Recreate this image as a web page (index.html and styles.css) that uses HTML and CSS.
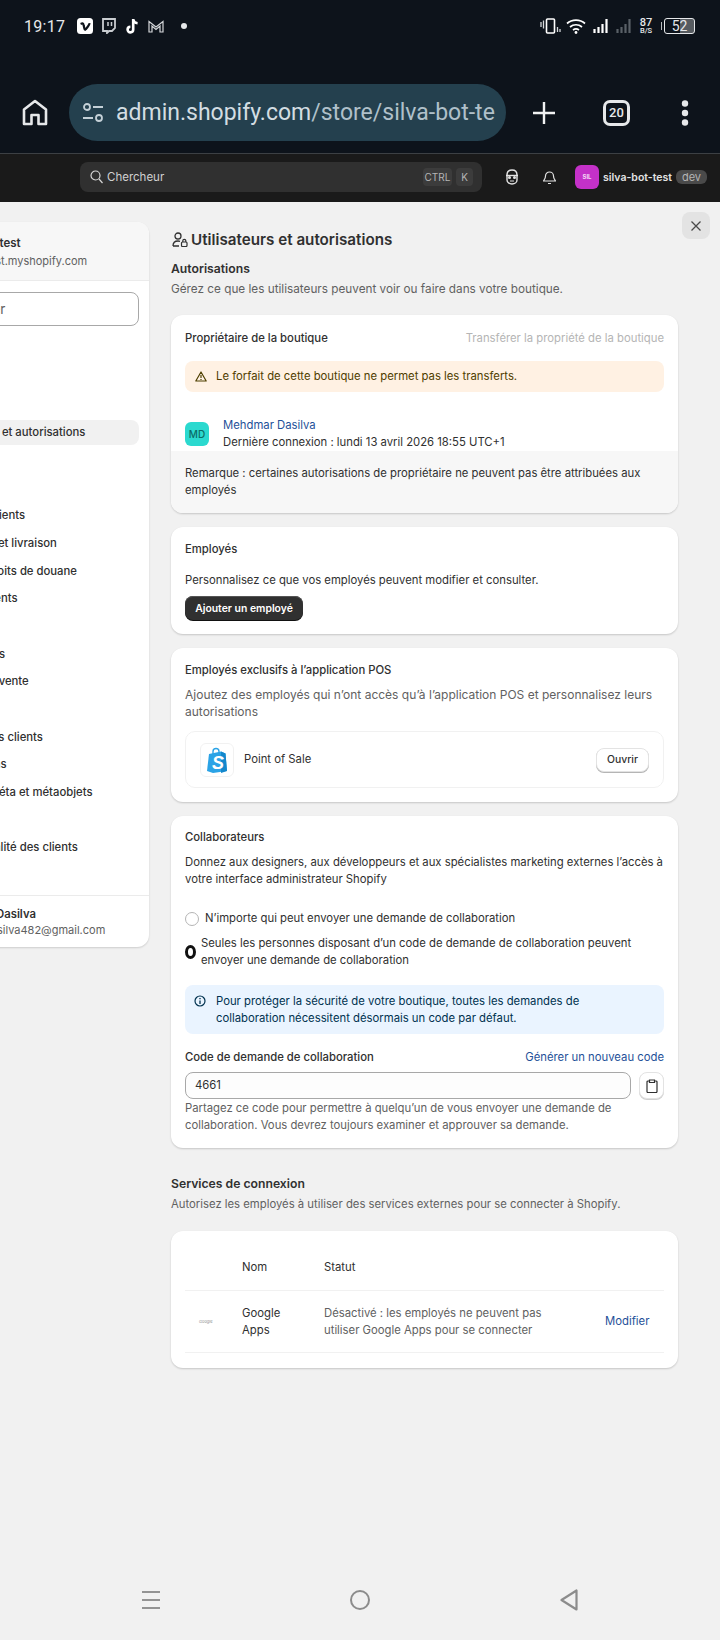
FILE: index.html
```html
<!DOCTYPE html>
<html lang="fr">
<head>
    <meta charset="UTF-8">
    <meta name="viewport" content="width=device-width, initial-scale=1.0">
    <title>Utilisateurs et autorisations</title>
    <link rel="stylesheet" href="styles.css">
</head>
<body>
<div class="page">
    <!-- phone status bar + browser toolbar -->
    <div class="browser">
        <div class="status">
            <span class="clock">19:17</span>
            <svg class="st-vimeo" width="16" height="16" viewBox="0 0 16 16"><rect width="16" height="16" rx="3.5" fill="#fff"/><path d="M3.6 6 L4.6 5.6 C6 5 6.4 6 6.7 7.6 L7.5 11 C7.8 12 8.2 12 8.8 11.2 C10.4 9.4 12.6 6.6 12.4 5.2" fill="none" stroke="#0d131b" stroke-width="2.2"/></svg>
            <svg class="st-twitch" width="14" height="16" viewBox="0 0 14 16"><path d="M1 1h12v9l-3 3H7l-2 2v-2H1z" fill="none" stroke="#c9cdd1" stroke-width="1.8"/><path d="M6 4v4M9.5 4v4" stroke="#c9cdd1" stroke-width="1.5"/></svg>
            <svg class="st-tiktok" width="14" height="17" viewBox="0 0 14 17"><path d="M8.2 1v10.6a2.8 2.8 0 1 1-2.8-2.8M8.2 1.4c.4 2.3 1.9 3.6 4.4 3.8" fill="none" stroke="#fff" stroke-width="2.6"/></svg>
            <svg class="st-m" width="16" height="13" viewBox="0 0 16 13"><path d="M1 12V1.500L8 7l7-5.500V12h-3V6L8 9.500 4 6v6z" fill="none" stroke="#d5d8db" stroke-width="1.200"/></svg>
            <span class="st-dot"></span>
            <svg class="st-vib" width="22" height="17" viewBox="0 0 22 17"><rect x="6.500" y="1" width="8" height="14" rx="1" fill="none" stroke="#fff" stroke-width="1.600"/><path d="M1 4v5M3.500 2.500v8M17.500 9v5M20 11v3" stroke="#d5d8db" stroke-width="1.300"/></svg>
            <svg class="st-wifi" width="20" height="16" viewBox="0 0 20 16"><path d="M1 5.500c5-4.500 13-4.500 18 0M4 9c3.500-3 8.500-3 12 0M7 12c1.800-1.300 4.200-1.300 6 0" fill="none" stroke="#fff" stroke-width="1.700"/><circle cx="10" cy="14.500" r="1.400" fill="#fff"/></svg>
            <svg class="st-sig" width="16" height="16" viewBox="0 0 16 16"><path d="M1.500 11v4M5.500 9v6M9.500 6v9M13.500 1v14" stroke="#fff" stroke-width="2.200"/></svg>
            <svg class="st-sig2" width="16" height="16" viewBox="0 0 16 16"><path d="M1.500 11v4M5.500 9v6M9.500 6v9M13.500 1v14" stroke="#596067" stroke-width="2.200"/></svg>
            <span class="st-speed"><b>87</b><i>B/S</i></span>
            <span class="st-batt-cap"></span>
            <span class="st-batt"><span>52</span></span>
        </div>
        <div class="toolbar">
            <svg class="tb-home" width="26" height="27" viewBox="0 0 26 27"><path d="M2 25V10.500L13 2l11 8.500V25h-7.500v-9h-7v9z" fill="none" stroke="#e6e8ea" stroke-width="2.600" stroke-linejoin="round"/></svg>
            <div class="addr">
                <svg width="22" height="20" viewBox="0 0 22 20"><circle cx="5" cy="4" r="3" fill="none" stroke="#c4d0d7" stroke-width="1.800"/><path d="M11 4h10M1 15h10" stroke="#c4d0d7" stroke-width="1.800"/><circle cx="17" cy="15" r="3" fill="none" stroke="#c4d0d7" stroke-width="1.800"/></svg>
                <span class="addr-text"><span class="addr-host">admin.shopify.com</span>/store/silva-bot-test</span>
            </div>
            <svg class="tb-plus" width="24" height="24" viewBox="0 0 24 24"><path d="M12 1v22M1 12h22" stroke="#f1f2f3" stroke-width="2.400"/></svg>
            <span class="tb-tabs">20</span>
            <svg class="tb-dots" width="8" height="26" viewBox="0 0 8 26"><circle cx="4" cy="3.500" r="3.200" fill="#e6e8ea"/><circle cx="4" cy="13" r="3.200" fill="#e6e8ea"/><circle cx="4" cy="22.500" r="3.200" fill="#e6e8ea"/></svg>
        </div>
    </div>

    <!-- shopify top bar -->
    <div class="topbar">
        <div class="search">
            <svg width="13" height="14" viewBox="0 0 13 14"><circle cx="5.500" cy="5.500" r="4.500" fill="none" stroke="#d8d8d8" stroke-width="1.200"/><path d="M9 9l3.500 4" stroke="#d8d8d8" stroke-width="1.200"/></svg>
            <span class="search-label">Chercheur</span>
            <span class="kbd kbd-ctrl">CTRL</span>
            <span class="kbd kbd-k">K</span>
        </div>
        <svg class="tp-face" width="14" height="16" viewBox="0 0 14 16"><path d="M2 6c0-3 2-5 5-5s5 2 5 5v5c0 2-2 4-5 4s-5-2-5-4z" fill="none" stroke="#e3e3e3" stroke-width="1.400"/><path d="M1 6.500h12" stroke="#e3e3e3" stroke-width="1.400"/><circle cx="4.500" cy="8.500" r="1.500" fill="#e3e3e3"/><circle cx="9.500" cy="8.500" r="1.500" fill="#e3e3e3"/><path d="M5 12h4" stroke="#e3e3e3"/></svg>
        <svg class="tp-bell" width="13" height="15" viewBox="0 0 13 15"><path d="M2.500 6a4 4 0 0 1 8 0c0 3 1.500 4 2 5H.5c.5-1 2-2 2-5zM5 13.500h3" fill="none" stroke="#e3e3e3" stroke-width="1.200"/></svg>
        <span class="tp-avatar">SIL</span>
        <span class="tp-store">silva-bot-test</span>
        <span class="tp-dev">dev</span>
    </div>

    <!-- settings modal -->
    <div class="modal">
        <button class="close" type="button"><svg width="12" height="12" viewBox="0 0 12 12"><path d="M1.500 1.500l9 9M10.500 1.500l-9 9" stroke="#4a4a4a" stroke-width="1.300"/></svg></button>

        <aside class="side">
            <div class="side-head">
                <div class="side-store">silva-bot-test</div>
                <div class="side-url">silva-bot-test.myshopify.com</div>
            </div>
            <div class="side-search"><div class="side-input">Rechercher</div></div>
            <nav class="side-nav">
                <a>Général</a>
                <a>Forfait</a>
                <a>Facturation</a>
                <a class="on">Utilisateurs et autorisations</a>
                <a>Paiements</a>
                <a>Compte</a>
                <a>Comptes clients</a>
                <a>Expédition et livraison</a>
                <a>Taxes et droits de douane</a>
                <a>Emplacements</a>
                <a>Marchés</a>
                <a>Applications</a>
                <a>Canaux de vente</a>
                <a>Domaines</a>
                <a>Événements clients</a>
                <a>Notifications</a>
                <a>Données méta et métaobjets</a>
                <a>Langues</a>
                <a>Confidentialité des clients</a>
                <a>Politiques</a>
            </nav>
            <div class="side-user">
                <div class="side-name">Mehdmar Dasilva</div>
                <div class="side-mail">mehdmardasilva482@gmail.com</div>
            </div>
        </aside>

        <main class="main">
            <h1 class="title">
                <svg width="16" height="15" viewBox="0 0 16 15"><circle cx="6" cy="4" r="3" fill="none" stroke="#303030" stroke-width="1.300"/><path d="M1 14c0-3 2-5 5-5 1 0 1.500.2 2 .4M1 14h6" fill="none" stroke="#303030" stroke-width="1.300"/><rect x="9.500" y="10" width="5.500" height="4.500" rx="1" fill="none" stroke="#303030" stroke-width="1.200"/><path d="M10.800 10V8.800a1.500 1.500 0 0 1 3 0V10" fill="none" stroke="#303030" stroke-width="1.200"/></svg>
                Utilisateurs et autorisations
            </h1>
            <h2 class="sec-title sec-auth">Autorisations</h2>
            <p class="sec-text sec-text-wide">Gérez ce que les utilisateurs peuvent voir ou faire dans votre boutique.</p>

            <section class="card card-first">
                <div class="card-body">
                    <div class="row-between">
                        <h3>Propriétaire de la boutique</h3>
                        <span class="muted">Transférer la propriété de la boutique</span>
                    </div>
                    <div class="banner warn">
                        <svg width="12" height="11" viewBox="0 0 12 11"><path d="M6 1L.8 10h10.400z" fill="none" stroke="#4f4000" stroke-width="1.200" stroke-linejoin="round"/><path d="M6 4v3M6 8v1" stroke="#4f4000" stroke-width="1.200"/></svg>
                        <span>Le forfait de cette boutique ne permet pas les transferts.</span>
                    </div>
                    <div class="owner">
                        <span class="avatar">MD</span>
                        <div>
                            <div class="link">Mehdmar Dasilva</div>
                            <div class="dark">Dernière connexion : lundi 13 avril 2026 18:55 UTC+1</div>
                        </div>
                    </div>
                </div>
                <div class="card-foot">Remarque : certaines autorisations de propriétaire ne peuvent pas être attribuées aux employés</div>
            </section>

            <section class="card pad">
                <h3>Employés</h3>
                <p class="dark staff-text">Personnalisez ce que vos employés peuvent modifier et consulter.</p>
                <button class="btn-dark" type="button">Ajouter un employé</button>
            </section>

            <section class="card pad">
                <h3>Employés exclusifs à l’application POS</h3>
                <p class="grey pos-text">Ajoutez des employés qui n’ont accès qu’à l’application POS et personnalisez leurs autorisations</p>
                <div class="app-box">
                    <span class="app-tile">
                        <svg width="20" height="26" viewBox="0 0 20 26"><path d="M2 7L14 4.500l4.500 2 1.500 17.500-14 2-6-2z" fill="#2ba3e6"/><path d="M14 4.500l4.500 2 1.500 17.500-6 2z" fill="#1488cc"/><path d="M6 7V4.500a3 3 0 0 1 6 0V7" fill="none" stroke="#2ba3e6" stroke-width="1.400"/><text x="5" y="22" class="app-s">S</text></svg>
                    </span>
                    <span class="dark">Point of Sale</span>
                    <button class="btn-light" type="button">Ouvrir</button>
                </div>
            </section>

            <section class="card pad pad-collab">
                <h3>Collaborateurs</h3>
                <p class="dark mt8">Donnez aux designers, aux développeurs et aux spécialistes marketing externes l’accès à votre interface administrateur Shopify</p>
                <label class="radio radio-one"><span class="dot"></span><span>N’importe qui peut envoyer une demande de collaboration</span></label>
                <label class="radio radio-two"><span class="dot-on"></span><span>Seules les personnes disposant d’un code de demande de collaboration peuvent envoyer une demande de collaboration</span></label>
                <div class="banner info">
                    <svg width="12" height="12" viewBox="0 0 12 12"><circle cx="6" cy="6" r="5" fill="none" stroke="#00324f" stroke-width="1.200"/><path d="M6 5.500V9M6 3v1.200" stroke="#00324f" stroke-width="1.300"/></svg>
                    <span>Pour protéger la sécurité de votre boutique, toutes les demandes de collaboration nécessitent désormais un code par défaut.</span>
                </div>
                <div class="row-between code-head">
                    <span class="label">Code de demande de collaboration</span>
                    <span class="link">Générer un nouveau code</span>
                </div>
                <div class="code-row">
                    <div class="code-input">4661</div>
                    <button class="code-copy" type="button"><svg width="12" height="14" viewBox="0 0 12 14"><path d="M3.500 2H2a1 1 0 0 0-1 1v9.500a1 1 0 0 0 1 1h8a1 1 0 0 0 1-1V3a1 1 0 0 0-1-1H8.500M3.500 1h5v2.500h-5z" fill="none" stroke="#303030" stroke-width="1.200"/></svg></button>
                </div>
                <p class="grey code-help">Partagez ce code pour permettre à quelqu’un de vous envoyer une demande de collaboration. Vous devrez toujours examiner et approuver sa demande.</p>
            </section>

            <h2 class="sec-title sec-serv">Services de connexion</h2>
            <p class="sec-text">Autorisez les employés à utiliser des services externes pour se connecter à Shopify.</p>

            <section class="card card-table">
                <div class="t-row t-head">
                    <span></span>
                    <span>Nom</span>
                    <span>Statut</span>
                </div>
                <div class="t-row t-line">
                    <span class="g-logo">Google</span>
                    <span class="dark t-name">Google Apps</span>
                    <span class="grey t-status">Désactivé : les employés ne peuvent pas utiliser Google Apps pour se connecter</span>
                    <span class="link">Modifier</span>
                </div>
            </section>
        </main>
    </div>

    <!-- android nav buttons -->
    <div class="navbar">
        <svg width="18" height="20" viewBox="0 0 18 20"><path d="M0 2h18M0 10h18M0 18h18" stroke="#939393" stroke-width="2.200"/></svg>
        <svg width="20" height="20" viewBox="0 0 20 20"><circle cx="10" cy="10" r="9" fill="none" stroke="#8c8c8c" stroke-width="2"/></svg>
        <svg width="18" height="22" viewBox="0 0 18 22"><path d="M16.500 1.500v19L1.500 11z" fill="none" stroke="#8c8c8c" stroke-width="2.200" stroke-linejoin="round"/></svg>
    </div>
</div>
</body>
</html>
```

FILE: styles.css
```css
* {
    box-sizing: border-box;
}
body {
    margin: 0;
    font-family: Inter, "Noto Sans", sans-serif;
    font-size: 11.300px;
    line-height: 17px;
    color: #303030;
    background-color: #f1f1f1;
}
p, h1, h2, h3 {
    margin: 0;
}
svg {
    display: block;
    flex: none;
}
button {
    font-family: inherit;
    cursor: pointer;
}
.page {
    width: 720px;
    height: 1640px;
    display: flex;
    flex-direction: column;
    overflow: hidden;
}

/* browser */
.browser {
    height: 154px;
    background-color: #0d131b;
    border-bottom: 1px solid #3c4044;
    flex: none;
}
.status {
    height: 52px;
    display: flex;
    align-items: center;
    padding-left: 24px;
    font-family: Roboto, sans-serif;
    color: #e6e8ea;
}
.clock {
    font-size: 16px;
    width: 53px;
    letter-spacing: 0.3px;
}
.st-twitch { margin-left: 9px; }
.st-tiktok { margin-left: 9px; }
.st-m { margin-left: 9px; }
.st-dot {
    width: 6px;
    height: 6px;
    border-radius: 50%;
    background-color: #e6e8ea;
    margin-left: 17px;
    margin-right: auto;
}
.st-wifi { margin-left: 4px; }
.st-sig { margin-left: 7px; }
.st-sig2 { margin-left: 7px; }
.st-speed {
    margin-left: 6px;
    width: 16px;
    display: flex;
    flex-direction: column;
    align-items: center;
    font-size: 11px;
    line-height: 9px;
}
.st-speed b { font-weight: 500; }
.st-speed i {
    font-style: normal;
    font-weight: 500;
    font-size: 7.500px;
    line-height: 7px;
}
.st-batt-cap {
    width: 1px;
    height: 8px;
    background-color: #b8bbbe;
    margin: 0 2px 0 7px;
}
.st-batt {
    width: 31px;
    height: 16px;
    margin-right: 25px;
    border: 1px solid #e6e8ea;
    border-radius: 3px;
    background: linear-gradient(90deg, #0d131b 52%, #565b60 52%);
    font-size: 14px;
    line-height: 14px;
    text-align: center;
}
.toolbar {
    display: flex;
    align-items: center;
    height: 57px;
    margin-top: 32px;
    padding-left: 22px;
}
.addr {
    width: 437px;
    height: 57px;
    margin-left: 21px;
    border-radius: 29px;
    background-color: #24404e;
    display: flex;
    align-items: center;
    padding-left: 13px;
    overflow: hidden;
}
.addr-text {
    margin-left: 12px;
    width: 379px;
    overflow: hidden;
    white-space: nowrap;
    font-family: Roboto, sans-serif;
    font-size: 23px;
    line-height: 30px;
    color: #b0c0ca;
}
.addr-host { color: #d3dde2; }
.tb-plus { margin-left: 26px; }
.tb-tabs {
    width: 27px;
    height: 26px;
    margin-left: 47px;
    border: 3px solid #e6e8ea;
    border-radius: 7px;
    font-family: Roboto, sans-serif;
    font-size: 13px;
    font-weight: 500;
    line-height: 20px;
    text-align: center;
    color: #e6e8ea;
}
.tb-dots { margin-left: 51px; }

/* top bar */
.topbar {
    height: 48px;
    flex: none;
    background-color: #1a1a1a;
    display: flex;
    align-items: center;
    padding: 0 0 2px 80px;
}
.search {
    width: 402px;
    height: 30px;
    background-color: #303030;
    border-radius: 8px;
    display: flex;
    align-items: center;
    padding-left: 10px;
    color: #d0d0d0;
}
.search-label {
    margin-left: 4px;
    margin-right: auto;
    font-size: 11.500px;
}
.kbd {
    height: 18px;
    background-color: #3c3c3c;
    border-radius: 4px;
    font-size: 10px;
    line-height: 18px;
    text-align: center;
    color: #b5b5b5;
}
.kbd-ctrl { width: 29px; }
.kbd-k {
    width: 17px;
    margin-left: 4px;
    margin-right: 9px;
}
.tp-face { margin-left: 23px; }
.tp-bell { margin-left: 24px; }
.tp-avatar {
    width: 24px;
    height: 24px;
    margin-left: 19px;
    border-radius: 6px;
    background-color: #c431c8;
    color: #f5d8f5;
    font-size: 6px;
    font-weight: 700;
    line-height: 24px;
    text-align: center;
}
.tp-store {
    margin-left: 4px;
    font-size: 10.500px;
    font-weight: 600;
    color: #e3e3e3;
}
.tp-dev {
    width: 31px;
    height: 14px;
    margin-left: 4px;
    border-radius: 6px;
    background-color: #4a4a4a;
    font-size: 11px;
    line-height: 14px;
    text-align: center;
    color: #b5b5b5;
}

/* modal */
.modal {
    flex: 1;
    min-height: 0;
    position: relative;
    display: flex;
    align-items: flex-start;
    background-color: #f1f1f1;
    border-top-right-radius: 12px;
    padding-top: 20px;
}
.close {
    position: absolute;
    top: 10px;
    left: 682px;
    width: 28px;
    height: 27px;
    border: none;
    border-radius: 8px;
    background-color: #e3e3e3;
    display: flex;
    align-items: center;
    justify-content: center;
    padding: 0;
}

/* sidebar */
.side {
    width: 249px;
    margin-left: -100px;
    flex: none;
    background-color: #fff;
    border-radius: 12px;
    box-shadow: 0 1px 2px rgba(0, 0, 0, 0.15);
    overflow: hidden;
}
.side-head {
    height: 59px;
    padding: 12px 0 0 35px;
    background-color: #f7f7f7;
    border-bottom: 1px solid #ebebeb;
    white-space: nowrap;
}
.side-store {
    font-weight: 600;
    font-size: 11.500px;
    padding: 1px 0 0 10px;
}
.side-url {
    color: #616161;
    font-size: 11px;
    line-height: 19px;
}
.side-search {
    padding: 11px 10px 0 10px;
}
.side-input {
    height: 34px;
    border: 1px solid #a8a8a8;
    border-radius: 8px;
    padding-left: 21px;
    font-size: 13.500px;
    line-height: 32px;
    color: #616161;
}
.side-nav {
    padding: 11px 10px 7px 10px;
    display: flex;
    flex-direction: column;
    gap: 2.700px;
}
.side-nav a {
    height: 25px;
    padding-left: 28px;
    border-radius: 8px;
    line-height: 25px;
    white-space: nowrap;
    font-weight: 450;
}
.side-nav a.on {
    background-color: #f1f1f1;
}
.side-user {
    height: 52px;
    padding: 10px 0 0 35px;
    border-top: 1px solid #ebebeb;
    white-space: nowrap;
}
.side-name {
    font-weight: 600;
    line-height: 17px;
    padding-left: 6px;
}
.side-mail {
    color: #616161;
    font-size: 11px;
    line-height: 15px;
}

/* main column */
.main {
    width: 507px;
    margin-left: 22px;
    flex: none;
    padding-top: 6px;
}
.title {
    display: flex;
    align-items: center;
    gap: 3px;
    height: 22px;
    font-size: 15.200px;
    font-weight: 600;
    margin-left: 1px;
}
.sec-title {
    font-size: 12.200px;
    font-weight: 600;
    line-height: 17px;
}
.sec-auth { margin-top: 10px; }
.sec-serv { margin-top: 27px; }
.sec-text {
    margin-top: 4px;
    color: #616161;
}
.sec-text-wide { font-size: 11.750px; }
.card {
    background-color: #fff;
    border-radius: 12px;
    box-shadow: 0 1px 2px rgba(0, 0, 0, 0.18);
    margin-bottom: 14px;
    overflow: hidden;
}
.card h3 {
    font-size: 11.300px;
    font-weight: 550;
    line-height: 17px;
}
.card-first { margin-top: 17px; }
.card-body {
    height: 136px;
    padding: 15px 14px 0;
    overflow: hidden;
}
.card-foot {
    height: 62px;
    padding: 14px 14px 0;
    background-color: #f7f7f7;
}
.pad { padding: 14px; }
.pad-collab { padding: 13px 14px 14px; margin-bottom: 0; }
.row-between {
    display: flex;
    justify-content: space-between;
    align-items: center;
}
.muted { color: #b5b5b5; }
.grey { color: #616161; }
.dark { color: #303030; }
.link { color: #1f5199; }
.mt8 { margin-top: 8px; }
.pos-text {
    margin-top: 7px;
    font-size: 12px;
}
.banner {
    border-radius: 8px;
    display: flex;
}
.warn {
    height: 31px;
    margin-top: 14px;
    padding-left: 10px;
    align-items: center;
    gap: 9px;
    background-color: #fff1e3;
    color: #4f3d00;
}
.owner {
    display: flex;
    align-items: center;
    gap: 14px;
    margin-top: 25px;
}
.avatar {
    width: 24px;
    height: 24px;
    border-radius: 6px;
    background-color: #2bd9cf;
    color: #0b6b66;
    font-size: 10px;
    line-height: 24px;
    text-align: center;
    font-weight: 500;
}
.staff-text { margin-top: 14px; }
.btn-dark {
    display: block;
    width: 118px;
    height: 24px;
    margin-top: 7px;
    padding: 0;
    border: none;
    border-radius: 8px;
    background-color: #303030;
    box-shadow: inset 0 1px 0 #555, 0 1px 0 #111;
    color: #fff;
    font-size: 10.400px;
    font-weight: 600;
}
.app-box {
    height: 57px;
    margin-top: 11px;
    padding: 0 14px;
    border: 1px solid #f1f1f1;
    border-radius: 10px;
    display: flex;
    align-items: center;
}
.app-tile {
    width: 34px;
    height: 34px;
    margin-right: 10px;
    border: 1px solid #f1f1f1;
    border-radius: 6px;
    display: flex;
    align-items: center;
    justify-content: center;
}
.app-s {
    font-family: "Liberation Sans", sans-serif;
    font-size: 18px;
    font-weight: 700;
    font-style: italic;
    fill: #fff;
}
.btn-light {
    margin-left: auto;
    width: 53px;
    height: 24px;
    padding: 0;
    border: 1px solid #e3e3e3;
    border-radius: 8px;
    background-color: #fff;
    box-shadow: 0 1px 0 #b5b5b5;
    color: #303030;
    font-size: 10.400px;
    font-weight: 500;
}
.radio {
    display: flex;
    align-items: center;
}
.radio-one {
    margin-top: 22px;
    gap: 6px;
}
.radio-two {
    margin-top: 8px;
    gap: 5px;
}
.dot {
    width: 14px;
    height: 14px;
    border: 1px solid #b5b5b5;
    border-radius: 50%;
}
.dot-on {
    width: 11px;
    height: 14px;
    flex: none;
    border: 3.500px solid #111;
    border-radius: 50%;
}
.info {
    margin-top: 16px;
    padding: 8px 70px 7px 9px;
    gap: 10px;
    background-color: #eaf4ff;
    color: #00324f;
}
.info svg { margin-top: 2px; }
.code-head { margin-top: 15px; }
.label { font-weight: 500; }
.code-row {
    display: flex;
    gap: 8px;
    margin-top: 6px;
}
.code-input {
    flex: 1;
    height: 27px;
    padding-left: 9px;
    border: 1px solid #a8a8a8;
    border-radius: 8px;
    background-color: #fdfdfd;
    line-height: 25px;
}
.code-copy {
    width: 25px;
    height: 27px;
    padding: 0;
    border: 1px solid #e3e3e3;
    border-radius: 8px;
    background-color: #fff;
    box-shadow: 0 1px 0 #d0d0d0;
    display: flex;
    align-items: center;
    justify-content: center;
}
.code-help { margin-top: 1px; }
.card-table {
    margin-top: 18px;
    padding: 0 14px 15px;
    margin-bottom: 0;
}
.t-row {
    display: grid;
    grid-template-columns: 57px 82px 1fr 59px;
    align-items: center;
    border-bottom: 1px solid #f1f1f1;
}
.t-head { padding: 28px 0 14px; }
.t-line { padding: 13.500px 0; }
.t-name { width: 50px; }
.t-status { width: 230px; }
.g-logo {
    font-size: 4px;
    color: #8a8a8a;
    padding-left: 14px;
}

/* android nav */
.navbar {
    height: 80px;
    flex: none;
    display: flex;
    justify-content: space-between;
    align-items: center;
    padding: 0 142px;
    background-color: #f1f1f1;
}
```
